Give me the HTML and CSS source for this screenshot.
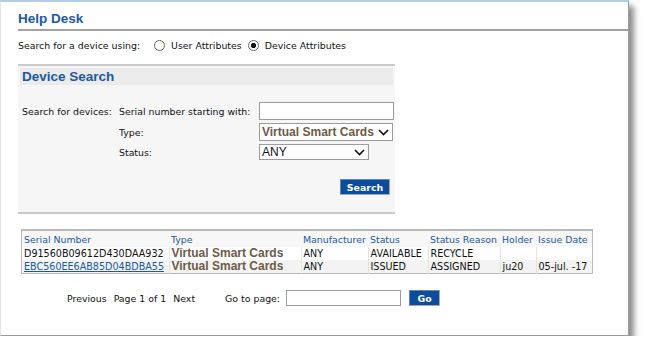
FILE: index.html
```html
<!DOCTYPE html>
<html lang="en">
<head>
    <meta charset="UTF-8">
    <title>Help Desk</title>
    <link rel="stylesheet" href="styles.css">
</head>
<body>

<div class="window">
    <h1 class="page-title">Help Desk</h1>

    <div class="mode-row">
        <span>Search for a device using:</span>
        <label class="radio"><input type="radio" name="mode"> User Attributes</label>
        <label class="radio"><input type="radio" name="mode" checked> Device Attributes</label>
    </div>

    <div class="search-box">
        <h2 class="box-title">Device Search</h2>

        <div class="search-grid">
            <span class="grid-label">Search for devices:</span>
            <label for="serial">Serial number starting with:</label>
            <input type="text" id="serial" class="text-input">

            <span></span>
            <label>Type:</label>
            <div class="select wide">
                <span class="select-value type-value">Virtual Smart Cards</span>
                <svg class="chevron" width="11" height="7" viewBox="0 0 11 7"><path d="M1 1 L5.5 5.5 L10 1" fill="none" stroke="#111" stroke-width="1.6"/></svg>
            </div>

            <span></span>
            <label>Status:</label>
            <div class="select narrow">
                <span class="select-value">ANY</span>
                <svg class="chevron" width="11" height="7" viewBox="0 0 11 7"><path d="M1 1 L5.5 5.5 L10 1" fill="none" stroke="#111" stroke-width="1.6"/></svg>
            </div>
        </div>

        <div class="button-row">
            <button type="button" class="btn">Search</button>
        </div>
    </div>

    <table class="results">
        <thead>
            <tr>
                <th>Serial Number</th>
                <th>Type</th>
                <th>Manufacturer</th>
                <th>Status</th>
                <th>Status Reason</th>
                <th>Holder</th>
                <th>Issue Date</th>
            </tr>
        </thead>
        <tbody>
            <tr>
                <td>D91560B09612D430DAA932</td>
                <td class="type-cell">Virtual Smart Cards</td>
                <td>ANY</td>
                <td>AVAILABLE</td>
                <td>RECYCLE</td>
                <td></td>
                <td></td>
            </tr>
            <tr class="alt">
                <td><a href="#">EBC560EE6AB85D04BDBA55</a></td>
                <td class="type-cell">Virtual Smart Cards</td>
                <td>ANY</td>
                <td>ISSUED</td>
                <td>ASSIGNED</td>
                <td>ju20</td>
                <td>05-jul. -17</td>
            </tr>
        </tbody>
    </table>

    <div class="pager">
        <span>Previous</span>
        <span>Page 1 of 1</span>
        <span>Next</span>
        <span class="goto">Go to page:</span>
        <input type="text" class="page-input">
        <button type="button" class="btn go">Go</button>
    </div>
</div>

</body>
</html>
```

FILE: styles.css
```css
body {
    margin: 0;
    background-color: #fff;
    font-family: "DejaVu Sans", Verdana, sans-serif;
    font-size: 9.4px;
    color: #111;
}

.window {
    box-sizing: border-box;
    width: 629px;
    height: 336px;
    border-top: 2px solid #b3cbe6;
    border-left: 1px solid #e4e4e4;
    border-right: 1px solid #9a9a9a;
    border-bottom: 1px solid #9a9a9a;
    background-color: #fff;
    box-shadow: 5px 6px 6px rgba(0, 0, 0, 0.45);
}

.page-title {
    margin: 0 0 4px 17px;
    padding-top: 10px;
    padding-bottom: 3px;
    font-family: "Liberation Sans", Arial, sans-serif;
    font-size: 13.5px;
    line-height: 14px;
    color: #1b58a4;
    border-bottom: 2px solid #a2a2a2;
}

.mode-row {
    display: flex;
    align-items: center;
    margin: 8px 0 0 17px;
    height: 13px;
}

.radio {
    display: flex;
    align-items: center;
    margin-left: 14px;
}

.radio + .radio {
    margin-left: 6px;
}

.radio input {
    appearance: none;
    width: 11px;
    height: 11px;
    margin: 0 6px 0 0;
    border: 1px solid #666;
    border-radius: 50%;
    background: #fff;
    box-sizing: border-box;
}

.radio input:checked {
    background: radial-gradient(circle, #111 0 2.4px, #fff 2.9px);
}

.search-box {
    width: 377px;
    margin: 12px 0 0 17px;
    padding: 2px 2px 17px;
    box-sizing: border-box;
    border-top: 2px solid #cbcbcb;
    border-bottom: 2px solid #cbcbcb;
    background-color: #f6f6f6;
}

.box-title {
    margin: 0;
    padding-left: 2px;
    height: 17px;
    font-family: "Liberation Sans", Arial, sans-serif;
    font-size: 13.5px;
    line-height: 17px;
    color: #1b58a4;
    background-color: #ebebeb;
}

.search-grid {
    display: grid;
    grid-template-columns: 97px 140px 135px;
    grid-template-rows: 18px 18px 16px;
    row-gap: 3px;
    align-items: center;
    margin-top: 17px;
    padding-left: 2px;
}

.text-input {
    box-sizing: border-box;
    width: 135px;
    height: 18px;
    margin: 0;
    border: 1px solid #9c9c9c;
    background: #fff;
}

.select {
    box-sizing: border-box;
    display: flex;
    align-items: center;
    justify-content: space-between;
    padding: 0 3px 0 2px;
    border: 1px solid #9c9c9c;
    background: #fff;
    font-family: "Liberation Sans", Arial, sans-serif;
    font-size: 12px;
}

.select.wide {
    width: 134px;
    height: 18px;
}

.select.narrow {
    width: 110px;
    height: 16px;
}

.type-value {
    font-weight: bold;
    color: #6d5a47;
}

.chevron {
    flex-shrink: 0;
}

.button-row {
    display: flex;
    justify-content: flex-end;
    margin-top: 19px;
    padding-right: 3px;
}

.btn {
    box-sizing: border-box;
    width: 50px;
    height: 16px;
    padding: 0;
    border: 1px solid;
    border-color: #5f86c2 #a8a8a8 #a8a8a8 #5f86c2;
    background-color: #0c4c9d;
    color: #fff;
    font-family: "DejaVu Sans", Verdana, sans-serif;
    font-size: 9.4px;
    font-weight: bold;
}

.results {
    margin: 15px 0 0 20px;
    width: 572px;
    border-collapse: collapse;
    border: 1px solid #b9b9b9;
    border-top-width: 2px;
    table-layout: fixed;
    font-size: 9.4px;
}

.results th {
    height: 16px;
    padding: 0 0 0 2px;
    text-align: left;
    font-weight: normal;
    color: #1b58a4;
    background-color: #f7f7f7;
}

.results td {
    height: 13px;
    padding: 0 0 0 2px;
    font-size: 9.6px;
    line-height: 13px;
    white-space: nowrap;
    overflow: hidden;
    border-left: 1px solid #e3e3e3;
    background-color: #fff;
}

.results td:first-child {
    border-left: none;
}

.results tr.alt td {
    background-color: #f3f3f3;
}

.results th:nth-child(1) { width: 145px; }
.results th:nth-child(2) { width: 130px; }
.results th:nth-child(3) { width: 65px; }
.results th:nth-child(4) { width: 58px; }
.results th:nth-child(5) { width: 70px; }
.results th:nth-child(6) { width: 34px; }

.results .type-cell {
    font-family: "Liberation Sans", Arial, sans-serif;
    font-size: 12px;
    font-weight: bold;
    color: #6d5a47;
}

.results a {
    color: #1b58a4;
}

.pager {
    display: flex;
    align-items: center;
    gap: 7px;
    margin: 16px 0 0 66px;
    height: 16px;
}

.pager .goto {
    margin-left: 23px;
}

.page-input {
    box-sizing: border-box;
    width: 115px;
    height: 16px;
    margin: 0 1px 0 -1px;
    border: 1px solid #9c9c9c;
    background: #fff;
}

.btn.go {
    width: 31px;
}
```
